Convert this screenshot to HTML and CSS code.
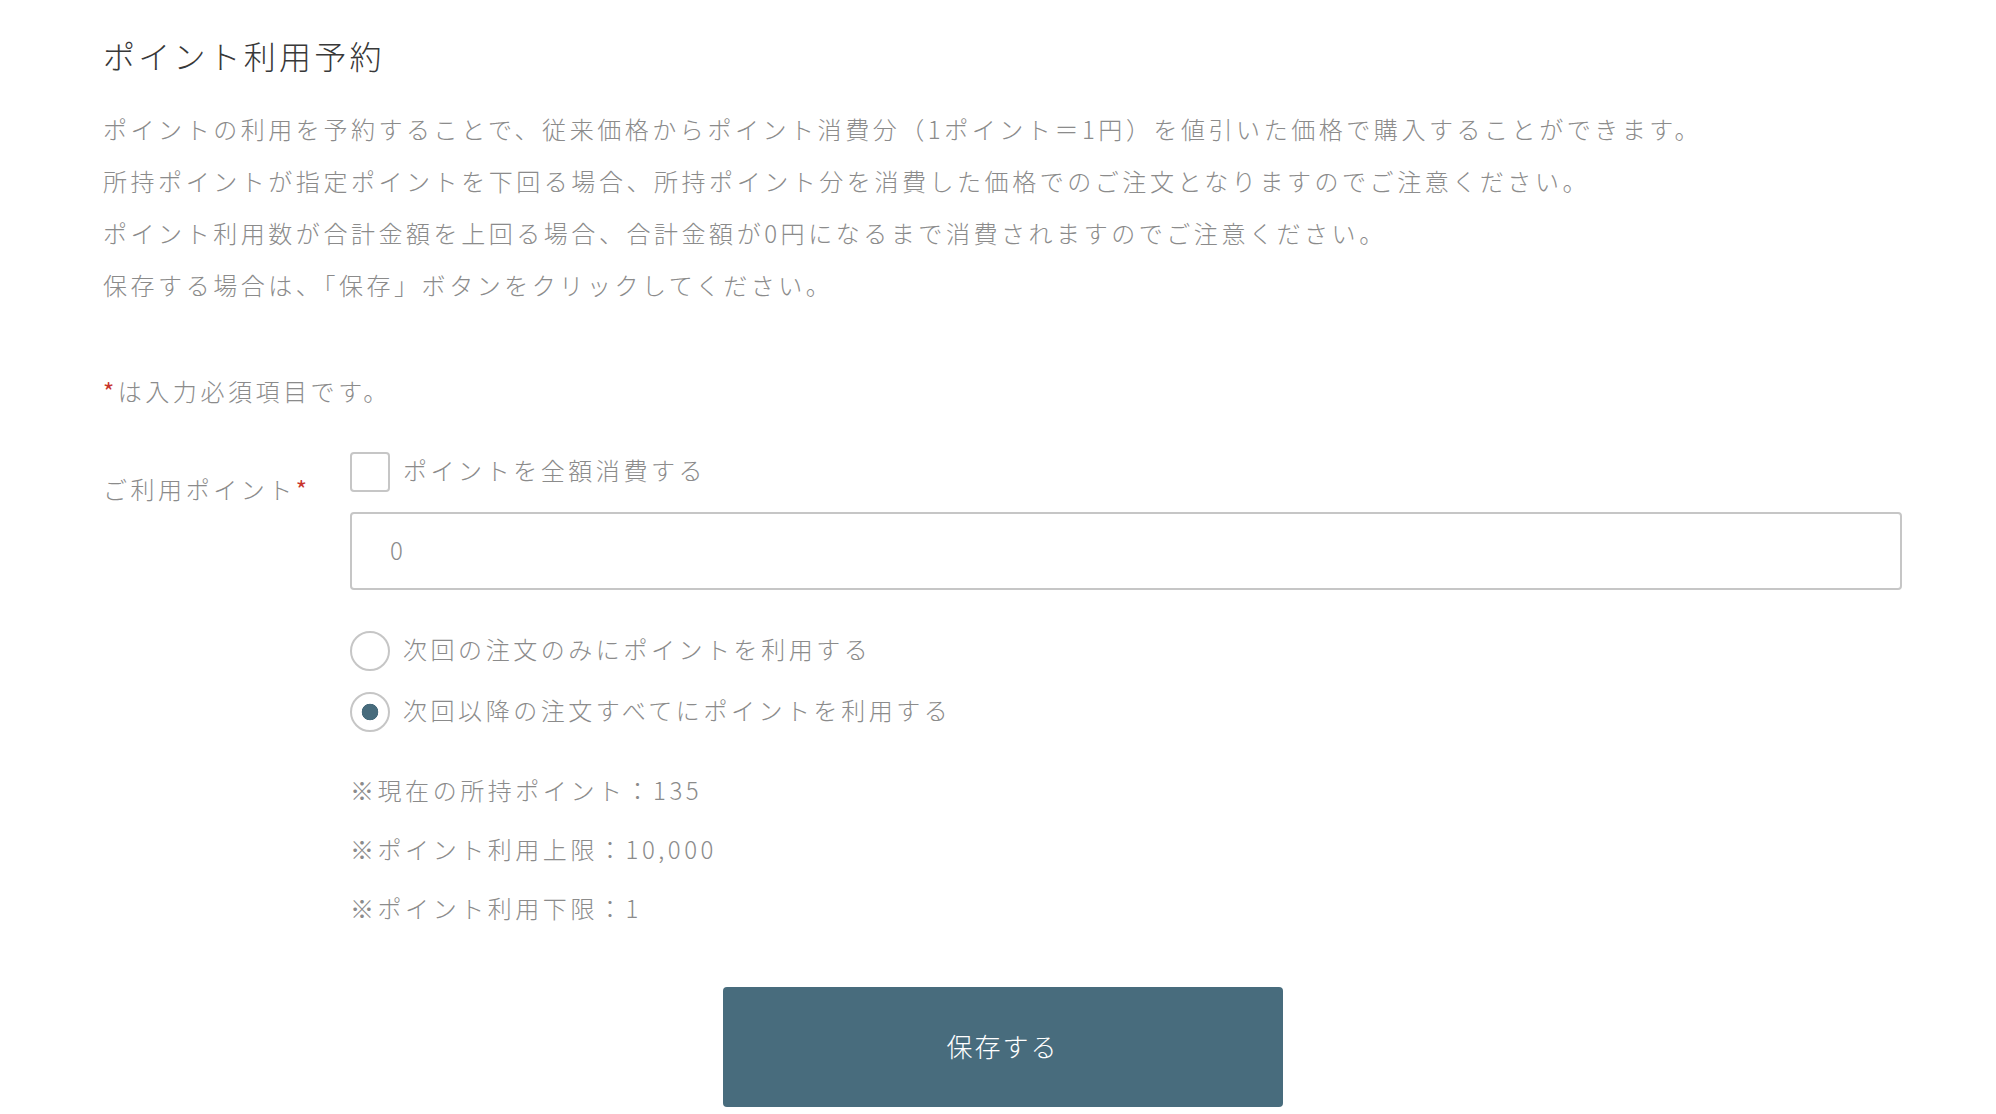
FILE: index.html
```html
<!DOCTYPE html>
<html lang="ja">
<head>
    <meta charset="UTF-8">
    <meta name="viewport" content="width=device-width, initial-scale=1.0">
    <title>ポイント利用予約</title>
    <link rel="stylesheet" href="styles.css">
</head>
<body>
    <div class="container">
        <h1 class="title">ポイント利用予約</h1>
        <div class="lead">
            <p>ポイントの利用を予約することで、従来価格からポイント消費分（1ポイント＝1円）を値引いた価格で購入することができます。</p>
            <p>所持ポイントが指定ポイントを下回る場合、所持ポイント分を消費した価格でのご注文となりますのでご注意ください。</p>
            <p>ポイント利用数が合計金額を上回る場合、合計金額が0円になるまで消費されますのでご注意ください。</p>
            <p>保存する場合は、「保存」ボタンをクリックしてください。</p>
        </div>

        <p class="required-note"><span class="req">*</span>は入力必須項目です。</p>

        <form class="point-form" onsubmit="return false;">
            <div class="form-row">
                <label class="form-label" for="points">ご利用ポイント<span class="req">*</span></label>
                <div class="form-field">
                    <label class="check-row">
                        <input type="checkbox" class="checkbox" name="useAll">
                        <span>ポイントを全額消費する</span>
                    </label>
                    <input type="text" id="points" class="text-input" name="points" value="0">
                    <div class="radio-list">
                        <label class="check-row">
                            <input type="radio" class="radio" name="scope" value="next">
                            <span>次回の注文のみにポイントを利用する</span>
                        </label>
                        <label class="check-row">
                            <input type="radio" class="radio" name="scope" value="all" checked>
                            <span>次回以降の注文すべてにポイントを利用する</span>
                        </label>
                    </div>
                    <ul class="notes">
                        <li>※現在の所持ポイント：135</li>
                        <li>※ポイント利用上限：10,000</li>
                        <li>※ポイント利用下限：1</li>
                    </ul>
                </div>
            </div>
            <button type="submit" class="save-button">保存する</button>
        </form>
    </div>
</body>
</html>
```

FILE: styles.css
```css
body {
    font-family: "Noto Sans CJK JP", "Noto Sans", sans-serif;
    font-weight: 300;
    color: #8b8b8b;
    background-color: #fff;
    margin: 0;
}
.container {
    padding: 35px 94px 0 103px;
}
.title {
    font-size: 32px;
    font-weight: 300;
    line-height: 40px;
    letter-spacing: 3.2px;
    color: #383838;
    margin: 0 0 28px;
}
.lead p {
    font-size: 24px;
    line-height: 52px;
    letter-spacing: 3.55px;
    margin: 0;
}
.required-note {
    font-size: 24px;
    line-height: 52px;
    letter-spacing: 3.55px;
    margin: 54px 0 0;
}
.req {
    color: #c8342c; /* red asterisk */
    font-weight: 400;
}
.point-form {
    margin-top: 35px;
}
.form-row {
    display: grid;
    grid-template-columns: 247px 1fr;
}
.form-label {
    font-size: 24px;
    line-height: 40px;
    letter-spacing: 3.55px;
    padding-top: 17px;
}
.check-row {
    display: flex;
    align-items: center;
    gap: 13px;
    height: 40px;
    font-size: 24px;
    letter-spacing: 3.55px;
    cursor: pointer;
}
.check-row span {
    padding-bottom: 6px;
}
.checkbox,
.radio {
    appearance: none;
    -webkit-appearance: none;
    width: 40px;
    height: 40px;
    margin: 0;
    border: 2px solid #c6c6c6;
    background: #fff;
    flex-shrink: 0;
}
.checkbox {
    border-radius: 4px;
}
.radio {
    border-radius: 50%;
}
.radio:checked {
    background: radial-gradient(circle, #476b7c 0 8px, #fff 8.6px);
}
.text-input {
    display: block;
    box-sizing: border-box;
    width: 100%;
    height: 78px;
    margin-top: 20px;
    padding: 0 38px 4px;
    border: 2px solid #c6c6c6;
    border-radius: 4px;
    font-family: inherit;
    font-weight: 300;
    font-size: 24px;
    letter-spacing: 2px;
    color: #8b8b8b;
}
.radio-list {
    display: flex;
    flex-direction: column;
    gap: 21px;
    margin-top: 41px;
}
.notes {
    list-style: none;
    padding: 0;
    margin: 28px 0 0;
}
.notes li {
    font-size: 24px;
    line-height: 59px;
    letter-spacing: 3.55px;
}
.save-button {
    display: block;
    width: 560px;
    height: 120px;
    margin: 50px auto 0;
    padding-bottom: 5px;
    background-color: #486c7d;
    color: #fff;
    border: none;
    border-radius: 4px;
    font-family: inherit;
    font-weight: 300;
    font-size: 26px;
    letter-spacing: 2px;
    cursor: pointer;
}
```
